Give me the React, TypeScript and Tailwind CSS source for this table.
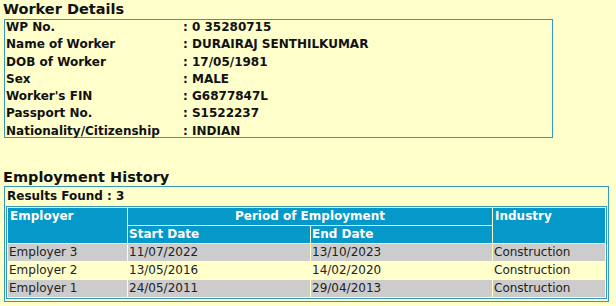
import React from "react";

const details: [string, string][] = [
  ["WP No.", ": 0 35280715"],
  ["Name of Worker", ": DURAIRAJ SENTHILKUMAR"],
  ["DOB of Worker", ": 17/05/1981"],
  ["Sex", ": MALE"],
  ["Worker's FIN", ": G6877847L"],
  ["Passport No.", ": S1522237"],
  ["Nationality/Citizenship", ": INDIAN"],
];

const rows = [
  { emp: "Employer 3", start: "11/07/2022", end: "13/10/2023", ind: "Construction", bg: "bg-[#cccccc]" },
  { emp: "Employer 2", start: "13/05/2016", end: "14/02/2020", ind: "Construction", bg: "bg-[#ffffcc]" },
  { emp: "Employer 1", start: "24/05/2011", end: "29/04/2013", ind: "Construction", bg: "bg-[#cccccc]" },
];

export default function App() {
  return (
    <div className="w-[616px] h-[306px] overflow-hidden bg-[#ffffcc] text-[#111] font-['DejaVu_Sans',Verdana,sans-serif]">
      <h2 className="pl-[3px] text-[14.5px] font-bold leading-[19px]">Worker Details</h2>
      <div className="ml-[4px] w-[549px] h-[119px] border border-[#3399bb]">
        {details.map(([k, v]) => (
          <div key={k} className="grid grid-cols-[178px_1fr] h-[17.25px] text-[12px] font-bold leading-[14px]">
            <div className="pl-[1px] whitespace-nowrap">{k}</div>
            <div className="whitespace-nowrap">{v}</div>
          </div>
        ))}
      </div>

      <h2 className="mt-[31px] pl-[3px] text-[14.5px] font-bold leading-[17px]">Employment History</h2>
      <div className="ml-[4px] w-[605px] border border-[#3399bb] p-[1px] pb-[2px]">
        <div className="h-[17px] pl-[1px] text-[12px] font-bold leading-[17px]">Results Found : 3</div>
        <table className="mt-[1px] w-[601px] table-fixed border-separate border-spacing-[1px] border border-[#3399bb] bg-[#ffffcc] text-[12px] leading-[17px]">
          <colgroup>
            <col className="w-[119px]" />
            <col className="w-[182px]" />
            <col className="w-[181px]" />
            <col className="w-[112px]" />
          </colgroup>
          <thead>
            <tr className="h-[17px]">
              <th rowSpan={2} className="bg-[#0599c9] px-[2px] py-0 text-left align-top font-bold text-white">Employer</th>
              <th colSpan={2} className="bg-[#0599c9] p-0 text-center align-top font-bold text-white">Period of Employment</th>
              <th rowSpan={2} className="bg-[#0599c9] px-[2px] py-0 text-left align-top font-bold text-white">Industry</th>
            </tr>
            <tr className="h-[17px]">
              <th className="bg-[#0599c9] px-[1px] py-0 text-left align-top font-bold text-white">Start Date</th>
              <th className="bg-[#0599c9] px-[1px] py-0 text-left align-top font-bold text-white">End Date</th>
            </tr>
          </thead>
          <tbody>
            {rows.map((r) => (
              <tr key={r.emp} className="h-[17px] text-[#222]">
                <td className={`${r.bg} px-[1px] py-0 align-top`}>{r.emp}</td>
                <td className={`${r.bg} px-[1px] py-0 align-top`}>{r.start}</td>
                <td className={`${r.bg} px-[1px] py-0 align-top`}>{r.end}</td>
                <td className={`${r.bg} px-[1px] py-0 align-top`}>{r.ind}</td>
              </tr>
            ))}
          </tbody>
        </table>
      </div>
    </div>
  );
}
